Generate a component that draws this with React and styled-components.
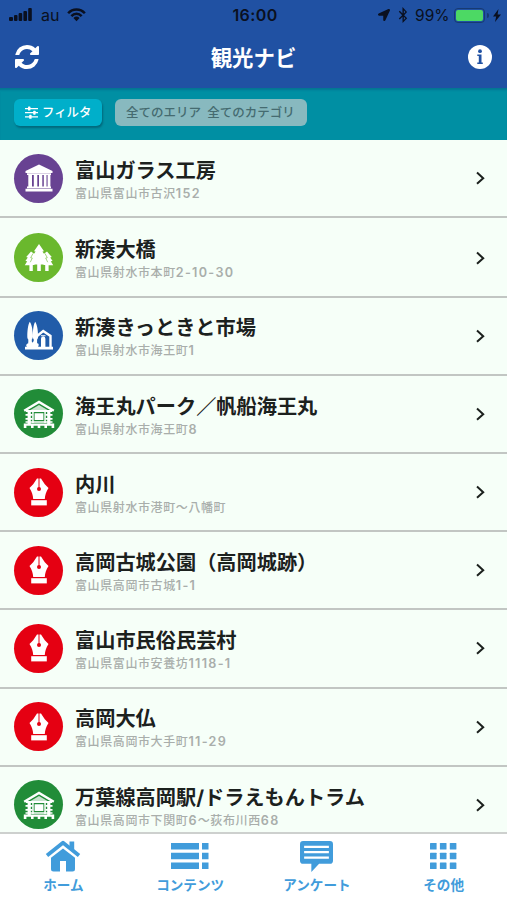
import React from 'react';
import styled, { createGlobalStyle } from 'styled-components';
import { FaBluetoothB, FaLocationArrow } from 'react-icons/fa';

const colors = {
  header: '#2051a3',
  bar: '#008fa3',
  filter: '#00afca',
  list: '#f6fff8',
  line: '#c2c6c3',
  tab: '#419cdb',
};

const GlobalStyle = createGlobalStyle`
  * {
    box-sizing: border-box;
  }

  body {
    margin: 0;
    overflow: hidden;
    font-family: Inter, 'Noto Sans CJK JP', sans-serif;
  }

  svg {
    display: block;
    flex: none;
  }
`;

const Screen = styled.div`
  display: flex;
  flex-direction: column;
  width: 507px;
  height: 900px;
  overflow: hidden;
  background: ${colors.list};
`;

const Header = styled.header`
  flex: none;
  height: 88px;
  background: ${colors.header};
`;

const StatusBar = styled.div`
  display: grid;
  grid-template-columns: 1fr auto 1fr;
  align-items: center;
  height: 30px;
  padding: 0 6px 0 9px;
  color: #0a1020;
  font-size: 16px;
`;

const StatusGroup = styled.div`
  display: flex;
  align-items: center;
  justify-content: ${props => (props.$end ? 'flex-end' : 'flex-start')};
  gap: ${props => props.$gap}px;
`;

const Clock = styled.div`
  font-size: 16px;
  font-weight: 600;
  letter-spacing: 0.4px;
`;

const Percent = styled.span`
  font-size: 15.5px;
`;

const Battery = styled.div`
  width: 31px;
  height: 15px;
  padding: 1px;
  border: 1px solid #173a72;
  border-radius: 4px;

  &::before {
    content: '';
    display: block;
    height: 100%;
    border-radius: 2px;
    background: #4cd964;
  }
`;

const BatteryTip = styled.div`
  width: 2px;
  height: 5px;
  margin: 0 0 0 -3px;
  border-radius: 0 2px 2px 0;
  background: #173a72;
`;

const TitleBar = styled.div`
  display: grid;
  grid-template-columns: 24px 1fr 24px;
  align-items: center;
  height: 54px;
  padding: 0 15px;
  color: #fff;
`;

const Title = styled.h1`
  margin: 0;
  padding-top: 2px;
  font-size: 21.4px;
  font-weight: 700;
  line-height: 30px;
  text-align: center;
`;

const FilterBar = styled.div`
  display: flex;
  flex: none;
  gap: 13px;
  height: 52px;
  padding: 11px 14px;
  background: ${colors.bar};
  box-shadow: inset 0 3px 2px -1px rgba(10, 60, 110, 0.3);
`;

const FilterButton = styled.button`
  display: flex;
  align-items: center;
  gap: 4px;
  width: 88px;
  height: 27px;
  padding: 0 0 1px 11px;
  border: 0;
  border-radius: 6px;
  background: ${colors.filter};
  box-shadow: 1px 2px 2px rgba(0, 50, 70, 0.4);
  color: #fff;
  font-family: inherit;
  font-size: 12.4px;
  font-weight: 500;
  white-space: nowrap;
`;

const FilterValue = styled.div`
  width: 192px;
  height: 27px;
  padding-left: 11px;
  border-radius: 6px;
  background: #88b9bf;
  color: #456b70;
  font-size: 12.5px;
  font-weight: 500;
  line-height: 27px;
  white-space: nowrap;
  word-spacing: 3px;
`;

const List = styled.ul`
  flex: 1 1 0;
  min-height: 0;
  margin: 0;
  padding: 0;
  overflow: hidden;
  list-style: none;
`;

const Row = styled.li`
  display: flex;
  align-items: center;
  height: 78.2px;
  padding: 0 20px 0 14px;
  border-bottom: 2px solid ${colors.line};

  &:nth-child(2) {
    height: 79.4px;
    padding-top: 1.5px;
  }
`;

const Badge = styled.div`
  display: flex;
  align-items: center;
  justify-content: center;
  flex: none;
  width: 49px;
  height: 49px;
  border-radius: 50%;
  background: ${props => props.$color};
`;

const Spot = styled.div`
  flex: 1;
  padding: 4.6px 0 0 12px;
  white-space: nowrap;
`;

const SpotName = styled.div`
  color: #1c211e;
  font-size: 20.2px;
  font-weight: 700;
  line-height: 26px;
`;

const SpotAddress = styled.div`
  color: #a9aeab;
  font-size: 12px;
  font-weight: 500;
  letter-spacing: 0.6px;
  line-height: 19px;
`;

const BlockNumber = styled.span`
  font-size: 12.6px;
  font-weight: 600;
  letter-spacing: 1.3px;
`;

const TabBar = styled.nav`
  display: grid;
  grid-template-columns: repeat(4, 1fr);
  flex: none;
  height: 68px;
  border-top: 2px solid #cdd0ce;
  background: #fff;
`;

const Tab = styled.div`
  display: flex;
  flex-direction: column;
  align-items: center;
  padding-top: 5px;
  color: ${colors.tab};
  font-size: 13.6px;
  font-weight: 700;
  line-height: 20px;
`;

const TabIcon = styled.div`
  display: flex;
  align-items: center;
  height: 34px;
  margin-bottom: 2px;
`;

const SignalIcon = () => (
  <svg width="24" height="14" viewBox="0 0 24 14" fill="currentColor">
    <rect x="0" y="9" width="4" height="4" rx="1" />
    <rect x="5" y="7" width="3.5" height="6" rx="1" />
    <rect x="9.6" y="5" width="3.6" height="8" rx="1" />
    <rect x="14.4" y="3" width="3.6" height="10" rx="1" />
    <rect x="19.2" y="0" width="3.6" height="13" rx="1" />
  </svg>
);

const WifiIcon = () => (
  <svg width="19" height="14" viewBox="0 0 20 14" fill="none">
    <path
      d="M1.2 5.2C6-.1 14-.1 18.8 5.2M4.6 8.2c3-3.3 7.8-3.3 10.8 0"
      stroke="currentColor"
      strokeWidth="2.6"
    />
    <path d="M6.8 10.2c2-2 4.4-2 6.4 0L10 13.6z" fill="currentColor" />
  </svg>
);

const BoltIcon = () => (
  <svg width="8" height="13" viewBox="0 0 8 13">
    <path d="M5.5 0 0 7.4h3.2L2 13l6-7.6H4.6z" fill="currentColor" />
  </svg>
);

const RefreshIcon = () => (
  <svg width="24" height="24" viewBox="128 128 1536 1536" fill="currentColor">
    <path d="M1639 1056q0 5-1 7-64 268-268 434.500t-478 166.500q-146 0-282.500-55t-243.500-157l-129 129q-19 19-45 19t-45-19-19-45v-448q0-26 19-45t45-19h448q26 0 45 19t19 45-19 45l-137 137q71 66 161 102t187 36q134 0 250-65t186-179q11-17 53-117 8-23 30-23h192q13 0 22.500 9.500t9.500 22.500zm25-800v448q0 26-19 45t-45 19h-448q-26 0-45-19t-19-45 19-45l138-138q-148-137-349-137-134 0-250 65t-186 179q-11 17-53 117-8 23-30 23h-199q-13 0-22.500-9.500t-9.500-22.500v-7q65-268 270-434.500t480-166.500q146 0 284 55.500t245 156.500l130-129q19-19 45-19t45 19 19 45z" />
  </svg>
);

const InfoIcon = () => (
  <svg width="24" height="24" viewBox="0 0 24 24">
    <circle cx="12" cy="12" r="12" fill="currentColor" />
    <circle cx="12" cy="6.2" r="1.9" fill={colors.header} />
    <path
      d="M9.3 9.6h4.2v8h1.3v1.500H9.3v-1.500h1.500v-6.500H9.3z"
      fill={colors.header}
    />
  </svg>
);

const SlidersIcon = () => (
  <svg width="13" height="13" viewBox="0 0 13 13" fill="currentColor">
    <path d="M0 2h13v1.2H0zM0 6.1h13v1.2H0zM0 10.2h13v1.2H0z" />
    <rect x="3" y=".6" width="2.4" height="4" rx=".6" />
    <rect x="8.2" y="4.7" width="2.4" height="4" rx=".6" />
    <rect x="4.2" y="8.8" width="2.4" height="4" rx=".6" />
  </svg>
);

const ChevronIcon = () => (
  <svg width="14" height="16" viewBox="0 0 14 16" fill="none">
    <path d="m4 2.6 6.2 5.6L4 13.8" stroke="#1c211e" strokeWidth="2" />
  </svg>
);

const MuseumIcon = () => (
  <svg width="30" height="30" viewBox="0 0 30 30" fill="#fff">
    <path d="M15 1.6 28.5 8v2h-27V8zM3 10.3h24V12H3z" />
    <path d="M4.3 12H8v12H4.3zM9.8 12h3.5v12H9.8zM15 12h3.3v12H15zM19.8 12h2.7v12h-2.7zM23.6 12h2.8v12h-2.8z" />
    <path d="M3 23.6h24v1.6H3zM1.500 25.8h27v2.7h-27z" />
  </svg>
);

const TreesIcon = () => (
  <svg width="30" height="30" viewBox="0 0 30 30" fill="#fff">
    <path d="M7 8.5 10.5 11v11H8.8v6H5.4v-5.8H.8l2.4-4-1.8-.2 2.4-3.6-1.600-.3z" />
    <path d="M23 8.500 19.500 11v11h1.700v6h3.400v-5.800h4.600l-2.400-4 1.800-.2-2.400-3.600 1.600-.3z" />
    <path d="m15 1 5 7.200-1.600.2 4 6-1.800.3 3.600 6.900h-7.400V28h-3.600v-6.400H5.800l3.600-6.900-1.800-.3 4-6-1.600-.2z" />
    <path
      d="m9 10.500-2.300 4.200 1.600.3-2 4.200M21 10.500l2.300 4.200-1.600.3 2 4.200"
      fill="none"
      stroke="#6ab82d"
      strokeWidth=".6"
    />
  </svg>
);

const HouseIcon = () => (
  <svg width="30" height="30" viewBox="0 0 30 30" fill="#fff">
    <path d="M5.800.8c2.200 3 3 9 3 14.600 0 1.400-.3 2.400-1 3V23H4.300v-4.600c-.7-.6-1-1.600-1-3C3.300 10 3.900 3.800 5.800.8zM11.200.8c2 3 2.900 9 2.900 14.600 0 1.400-.3 2.400-1 3V23H9.700v-4.600c-.6-.6-.9-1.600-.9-3C8.800 10 9.300 3.800 11.200.8z" />
    <path d="M1 28.400v-2.600h2c-1.600-1.600-.4-3.600 1.500-3.400 0-2.400 3.300-2.600 4-.6.7-2 4-2 4.400.4 1.800-.2 2.400 1.600 1.200 3.600H29v2.600z" />
    <path
      d="m12.200 15.700 7-5.700 7.300 5v11.500"
      fill="none"
      stroke="#fff"
      strokeWidth="2.4"
    />
    <path d="M17 17.800a2.200 2.200 0 0 1 4.400 0v8.700H17zM16.900 14.200h4.600v1h-4.600z" />
  </svg>
);

const PavilionIcon = () => (
  <svg width="32" height="30" viewBox="0 0 32 30" fill="#fff">
    <path
      d="M1.2 11.8 16 3l14.8 8.8"
      fill="none"
      stroke="#fff"
      strokeWidth="2.4"
    />
    <path d="m7.5 11 8.500-5 8.500 5z" opacity=".75" />
    <path d="M3 11h26v2H3zM2.500 15h7v1.800h-7zM22.500 15h7v1.800h-7zM2.500 19h7v1.800h-7zM22.500 19h7v1.800h-7zM2.500 22.200h27v1.600h-27z" />
    <path d="M4.600 11h3.200v14H4.600zM24.200 11h3.200v14h-3.200zM9.200 13h1.500v11H9.200zM21.300 13h1.500v11h-1.500z" />
    <path d="M11.600 14.300h8.800V21h-8.800z" />
    <path d="M.8 24.600h30.400v2.200H.8zM.8 26h2.600v3H.8zM8 26h2.600v3H8zM14.700 26h2.600v3h-2.600zM21.400 26H24v3h-2.600zM28.600 26h2.600v3h-2.600z" />
  </svg>
);

const PenIcon = ({ color }) => (
  <svg width="20" height="28" viewBox="0 0 20 28" fill="#fff">
    <path d="M8 .5h4l3.800 5.700 3.700 3.800c-2.400 4-3.500 7-3.700 11H4.200C4 17 2.900 14 .5 10l3.700-3.800z" />
    <path d="M9.500 0h1v11h-1z" fill={color} />
    <circle cx="10" cy="11" r="2" fill={color} />
    <path d="M2.200 22.200h15.600v5.200H2.200z" />
  </svg>
);

const HomeIcon = () => (
  <svg width="36" height="32" viewBox="0 0 36 32">
    <path
      d="m2 15.500 16-12.700 16 12.700"
      fill="none"
      stroke="currentColor"
      strokeWidth="3.8"
      strokeLinejoin="round"
    />
    <path
      d="M24.500 1.500h4.700v10l-4.700-3.700zM18 8.500l12 9.300V29a2.500 2.500 0 0 1-2.500 2.500H21V21h-6v10.500H8.500A2.500 2.500 0 0 1 6 29V17.800z"
      fill="currentColor"
    />
  </svg>
);

const ContentsIcon = () => (
  <svg width="38" height="26" viewBox="0 0 38 26" fill="currentColor">
    <path d="M0 0h28v6.400H0zM0 9.800h28v6.400H0zM0 19.600h28V26H0zM31 0h6.500v6.400H31zM31 9.800h6.500v6.400H31zM31 19.600h6.500V26H31z" />
  </svg>
);

const SurveyIcon = () => (
  <svg width="33" height="31" viewBox="0 0 32 30">
    <path
      d="M3 0h26a3 3 0 0 1 3 3v16a3 3 0 0 1-3 3H18.500L11 30v-8H3a3 3 0 0 1-3-3V3a3 3 0 0 1 3-3z"
      fill="currentColor"
    />
    <path d="M4 4.500h24v2.200H4zM4 9.700h24v2.200H4zM4 15h24v2.200H4z" fill="#fff" />
  </svg>
);

const GridIcon = () => (
  <svg width="27" height="26" viewBox="0 0 27 26" fill="currentColor">
    {[0, 9.7, 19.4].map(y =>
      [0, 9.9, 19.8].map(x => (
        <rect key={`${x}-${y}`} x={x} y={y} width="6.6" height="6.6" rx=".5" />
      )),
    )}
  </svg>
);

const categories = {
  museum: { color: '#684292', Icon: MuseumIcon },
  nature: { color: '#6ab82d', Icon: TreesIcon },
  market: { color: '#215ca9', Icon: HouseIcon },
  park: { color: '#218c38', Icon: PavilionIcon },
  culture: { color: '#e50012', Icon: PenIcon },
};

const spots = [
  { name: '富山ガラス工房', address: '富山県富山市古沢152', category: 'museum' },
  { name: '新湊大橋', address: '富山県射水市本町2-10-30', category: 'nature' },
  { name: '新湊きっときと市場', address: '富山県射水市海王町1', category: 'market' },
  { name: '海王丸パーク／帆船海王丸', address: '富山県射水市海王町8', category: 'park' },
  { name: '内川', address: '富山県射水市港町〜八幡町', category: 'culture' },
  { name: '高岡古城公園（高岡城跡）', address: '富山県高岡市古城1-1', category: 'culture' },
  { name: '富山市民俗民芸村', address: '富山県富山市安養坊1118-1', category: 'culture' },
  { name: '高岡大仏', address: '富山県高岡市大手町11-29', category: 'culture' },
  { name: '万葉線高岡駅/ドラえもんトラム', address: '富山県高岡市下関町6〜荻布川西68', category: 'park' },
];

const tabs = [
  { label: 'ホーム', icon: <HomeIcon /> },
  { label: 'コンテンツ', icon: <ContentsIcon /> },
  { label: 'アンケート', icon: <SurveyIcon /> },
  { label: 'その他', icon: <GridIcon /> },
];

const SpotRow = ({ name, address, category }) => {
  const { color, Icon } = categories[category];
  return (
    <Row>
      <Badge $color={color}>
        <Icon color={color} />
      </Badge>
      <Spot>
        <SpotName>{name}</SpotName>
        <SpotAddress>
          {address
            .split(/([\d-]+)/)
            .map((part, i) =>
              i % 2 ? <BlockNumber key={i}>{part}</BlockNumber> : part,
            )}
        </SpotAddress>
      </Spot>
      <ChevronIcon />
    </Row>
  );
};

const App = () => (
  <Screen>
    <GlobalStyle />
    <Header>
      <StatusBar>
        <StatusGroup $gap={8}>
          <SignalIcon />
          <span>au</span>
          <WifiIcon />
        </StatusGroup>
        <Clock>16:00</Clock>
        <StatusGroup $end $gap={4.5}>
          <FaLocationArrow size={12} />
          <FaBluetoothB size={16} />
          <Percent>99%</Percent>
          <Battery />
          <BatteryTip />
          <BoltIcon />
        </StatusGroup>
      </StatusBar>
      <TitleBar>
        <RefreshIcon />
        <Title>観光ナビ</Title>
        <InfoIcon />
      </TitleBar>
    </Header>
    <FilterBar>
      <FilterButton>
        <SlidersIcon />
        フィルタ
      </FilterButton>
      <FilterValue>全てのエリア 全てのカテゴリ</FilterValue>
    </FilterBar>
    <List>
      {spots.map(spot => (
        <SpotRow key={spot.name} {...spot} />
      ))}
    </List>
    <TabBar>
      {tabs.map(({ label, icon }) => (
        <Tab key={label}>
          <TabIcon>{icon}</TabIcon>
          {label}
        </Tab>
      ))}
    </TabBar>
  </Screen>
);

export default App;
